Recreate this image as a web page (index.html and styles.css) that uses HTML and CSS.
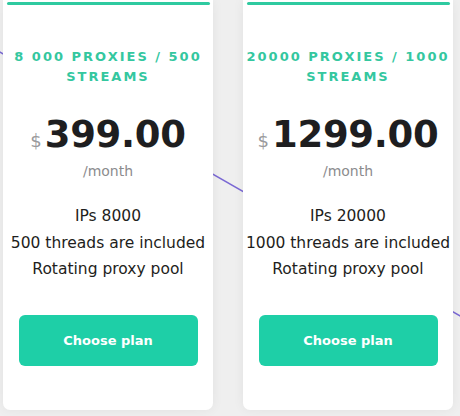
FILE: index.html
```html
<!DOCTYPE html>
<html>
<head>
<meta charset="utf-8">
<link rel="stylesheet" href="styles.css">
</head>
<body>
<div class="page">
  <svg class="bg-line" width="460" height="416" viewBox="0 0 460 416">
    <line x1="-2" y1="51" x2="462" y2="317" stroke="#7a68d4" stroke-width="1.6"/>
  </svg>
  <div class="cards">
    <div class="card">
      <div class="bar"></div>
      <div class="title">8 000 PROXIES / 500<br>STREAMS</div>
      <div class="price"><span class="cur">$</span><span class="amount">399.00</span></div>
      <div class="period">/month</div>
      <ul class="features">
        <li>IPs 8000</li>
        <li>500 threads are included</li>
        <li>Rotating proxy pool</li>
      </ul>
      <button class="btn">Choose plan</button>
    </div>
    <div class="card">
      <div class="bar"></div>
      <div class="title">20000 PROXIES / 1000<br>STREAMS</div>
      <div class="price"><span class="cur">$</span><span class="amount">1299.00</span></div>
      <div class="period">/month</div>
      <ul class="features">
        <li>IPs 20000</li>
        <li>1000 threads are included</li>
        <li>Rotating proxy pool</li>
      </ul>
      <button class="btn">Choose plan</button>
    </div>
  </div>
</div>
</body>
</html>
```
FILE: styles.css
```css
html, body {
  margin: 0;
  padding: 0;
}
body {
  width: 460px;
  height: 416px;
  overflow: hidden;
  background: #efefef;
  font-family: "DejaVu Sans", "Noto Sans", sans-serif;
}
.page {
  position: relative;
  width: 460px;
  height: 416px;
}
.bg-line {
  position: absolute;
  left: 0;
  top: 0;
}
.cards {
  position: relative;
  display: flex;
  gap: 30px;
  padding-left: 3px;
}
.card {
  width: 210px;
  height: 410px;
  background: #ffffff;
  border-radius: 0 0 7px 7px;
  box-shadow: 0 0 12px rgba(0, 0, 0, 0.06);
  display: flex;
  flex-direction: column;
  align-items: center;
}
.bar {
  width: 203px;
  height: 3px;
  margin-top: 2px;
  background: #2fcaa0;
  border-radius: 2px;
}
.title {
  margin-top: 42px;
  color: #34c79f;
  font-weight: bold;
  font-size: 13px;
  letter-spacing: 2px;
  line-height: 20px;
  text-align: center;
}
.price {
  margin-top: 26px;
  display: flex;
  align-items: baseline;
  line-height: 44px;
}
.cur {
  font-size: 18px;
  color: #9a9a9c;
  margin-right: 3px;
}
.amount {
  font-size: 37px;
  font-weight: bold;
  color: #1e1e20;
  letter-spacing: -0.3px;
}
.period {
  margin-top: -2px;
  font-size: 14px;
  color: #8c8c8e;
  line-height: 20px;
}
.features {
  list-style: none;
  margin: 22px 0 0;
  padding: 0;
  text-align: center;
  font-size: 15.5px;
  line-height: 26.5px;
  color: #1e1e20;
}
.btn {
  margin-top: 32px;
  width: 179px;
  height: 51px;
  border: none;
  border-radius: 6px;
  background: #1ecfa7;
  color: #ffffff;
  font-family: "DejaVu Sans", sans-serif;
  font-weight: bold;
  font-size: 13px;
}
```
